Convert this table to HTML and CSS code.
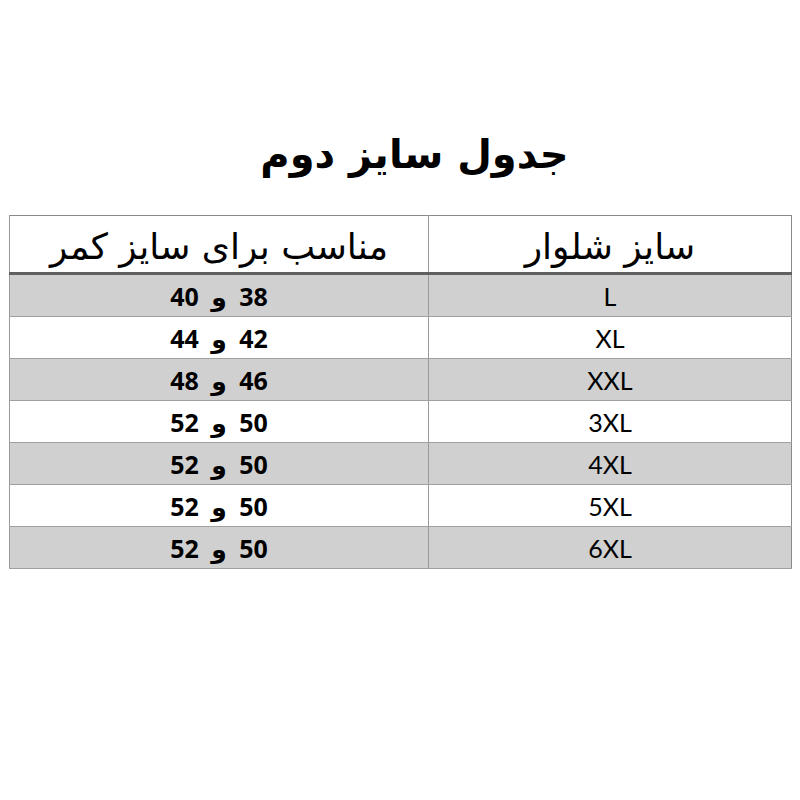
FILE: index.html
```html
<!DOCTYPE html>
<html lang="fa" dir="rtl">
<head>
<meta charset="utf-8">
<link rel="stylesheet" href="styles.css">
</head>
<body>
<div class="page">
  <h1 class="title">جدول سایز دوم</h1>
  <table class="sizes">
    <thead>
      <tr><th class="c-size">سایز شلوار</th><th class="c-waist">مناسب برای سایز کمر</th></tr>
    </thead>
    <tbody>
      <tr class="alt"><td class="c-size">L</td><td class="c-waist">38 و 40</td></tr>
      <tr><td class="c-size">XL</td><td class="c-waist">42 و 44</td></tr>
      <tr class="alt"><td class="c-size">XXL</td><td class="c-waist">46 و 48</td></tr>
      <tr><td class="c-size">3XL</td><td class="c-waist">50 و 52</td></tr>
      <tr class="alt"><td class="c-size">4XL</td><td class="c-waist">50 و 52</td></tr>
      <tr><td class="c-size">5XL</td><td class="c-waist">50 و 52</td></tr>
      <tr class="alt"><td class="c-size">6XL</td><td class="c-waist">50 و 52</td></tr>
    </tbody>
  </table>
</div>
</body>
</html>
```
FILE: styles.css
```css
html, body {
  margin: 0;
  padding: 0;
  background: #ffffff;
}
.page {
  width: 800px;
  height: 800px;
  padding: 0 8px 0 9px;
  box-sizing: border-box;
  display: flex;
  flex-direction: column;
  align-items: center;
}
.title {
  margin: 118px 0 0 0;
  padding-left: 28px;
  height: 97px;
  font-family: "DejaVu Sans", sans-serif;
  font-weight: bold;
  font-size: 40px;
  line-height: 72px;
  color: #000;
  text-align: center;
}
.sizes {
  width: 783px;
  border-collapse: collapse;
  border: 1px solid #8a8a8a;
  table-layout: fixed;
}
.sizes th, .sizes td {
  border-left: 1px solid #9a9a9a;
  text-align: center;
  padding: 0;
  color: #000;
}
.sizes th {
  height: 58px;
  padding-top: 5px;
  box-sizing: border-box;
  font-family: "DejaVu Sans", sans-serif;
  font-weight: normal;
  font-size: 36px;
  line-height: 40px;
  border-bottom: 3px solid #606060;
}
.sizes td {
  height: 41px;
  border-bottom: 1px solid #a0a0a0;
  font-family: Lato, "DejaVu Sans", sans-serif;
  font-size: 25px;
}
.c-size { width: 363px; }
.sizes td.c-waist {
  font-family: "Open Sans", "DejaVu Sans", sans-serif;
  font-weight: bold;
  font-size: 25px;
  word-spacing: 6px;
}
.alt td { background: #d0d0d0; }
```
